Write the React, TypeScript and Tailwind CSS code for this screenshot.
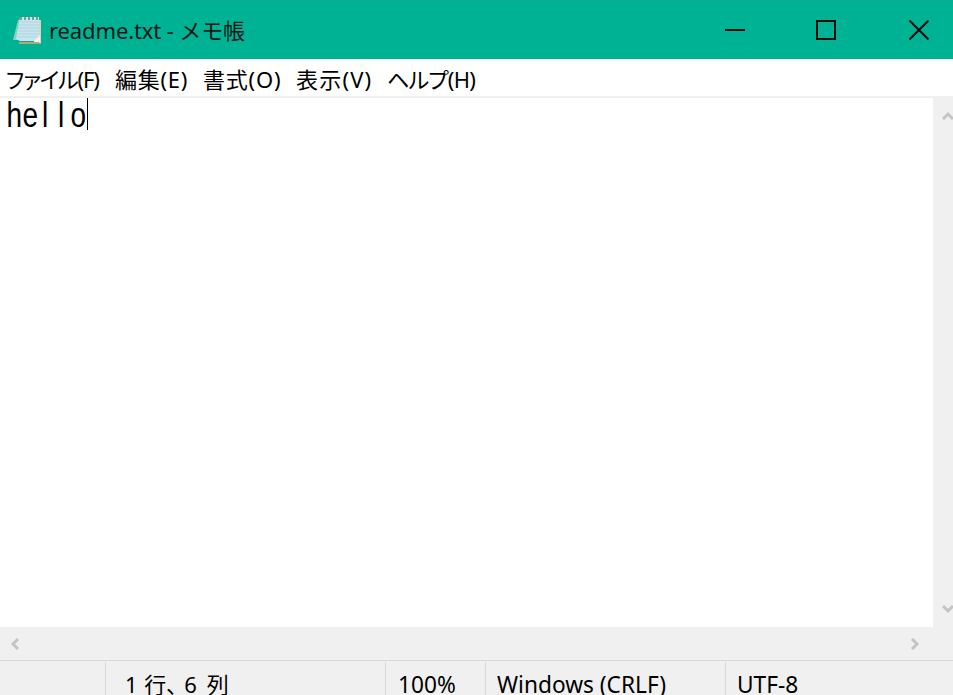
import React from 'react'

const uiFont = "font-['Noto_Sans','Noto_Sans_CJK_JP',sans-serif]"

const NotepadIcon = () => (
  <svg width="32" height="32" viewBox="0 0 32 32" className="shrink-0">
    <path d="M5 6 L12 6 L12 26 L0 26 Z" fill="#a9dbd6" opacity="0.75" />
    <rect x="6" y="28" width="22" height="2" fill="#b9a27e" />
    <rect x="26" y="6" width="2" height="23" fill="#d8d4c4" />
    <path d="M7 3 H26 V27 H7 L3 25 Z" fill="#c8e4ec" />
    <path d="M6 8 H26 M5.5 11 H26 M5 14 H26 M5 17 H26 M4.5 20 H26 M4 23 H26" stroke="#aed5e2" strokeWidth="1" />
    <path d="M21 27 L27 21 V28 H21 Z" fill="#f4f4ee" />
    <path d="M8 3 V6 M12 3 V6 M16 3 V6 M20 3 V6 M24 3 V6" stroke="#7c9a94" strokeWidth="2" />
  </svg>
)

const WindowButtons = () => (
  <div className="flex items-center h-full">
    <div className="w-[89px] flex justify-center">
      <svg width="20" height="20" viewBox="0 0 20 20">
        <rect x="0" y="9" width="20" height="2" fill="#0b0b0b" />
      </svg>
    </div>
    <div className="w-[93px] flex justify-center">
      <svg width="20" height="20" viewBox="0 0 20 20">
        <rect x="1" y="1" width="18" height="18" fill="none" stroke="#0b0b0b" strokeWidth="2" />
      </svg>
    </div>
    <div className="w-[93px] flex justify-center">
      <svg width="20" height="20" viewBox="0 0 20 20">
        <path d="M0.5 0.5 L19.5 19.5 M19.5 0.5 L0.5 19.5" stroke="#0b0b0b" strokeWidth="2" />
      </svg>
    </div>
  </div>
)

const Chevron = ({ d }: { d: string }) => (
  <svg width="12" height="12" viewBox="0 0 12 12" className="shrink-0">
    <path d={d} fill="none" stroke="#c4c4c4" strokeWidth="3" />
  </svg>
)

const App = () => {
  return (
    <div className={`w-[953px] h-[695px] overflow-hidden flex flex-col bg-white text-black ${uiFont}`}>
      <div className="h-[59px] shrink-0 bg-[#00b294] border-t border-[#12ab94] flex items-center justify-between">
        <div className="flex items-center pl-[13px] gap-[4px]">
          <NotepadIcon />
          <span className="text-[22px] leading-none tracking-[-0.12px] text-[#0a1a18]">readme.txt - メモ帳</span>
        </div>
        <div className="h-full -mr-[12px]">
          <WindowButtons />
        </div>
      </div>

      <div className="h-[39px] shrink-0 border-b-2 border-[#f0f0f0] flex items-center pl-[6px] pt-[3px] text-[22px] leading-none whitespace-nowrap">
        <span className="w-[109px] [font-feature-settings:'palt'] tracking-[-1.15px]">ファイル(F)</span>
        <span className="w-[88px] tracking-[0.75px]">編集(E)</span>
        <span className="w-[93px] tracking-[0.8px]">書式(O)</span>
        <span className="w-[91px] tracking-[1.2px]">表示(V)</span>
        <span className="[font-feature-settings:'palt'] tracking-[-0.75px]">ヘルプ(H)</span>
      </div>

      <div className="flex-1 flex min-h-0">
        <div className="flex-1">
          <div className="pl-[5px] h-[32px] flex items-center font-['Liberation_Sans',sans-serif] text-[35px] leading-none">
            {'hello'.split('').map((c, i) => (
              <span key={i} className="w-[16px] text-center scale-x-[0.8]">
                {c}
              </span>
            ))}
            <span className="w-px h-[32px] bg-black ml-[2px]" />
          </div>
        </div>
        <div className="w-[20px] bg-[#f0f0f0] flex flex-col justify-between items-center pl-[10px] py-[13px]">
          <Chevron d="M1 8 L6 3 L11 8" />
          <Chevron d="M1 4 L6 9 L11 4" />
        </div>
      </div>

      <div className="h-[33px] shrink-0 bg-[#f0f0f0] flex items-center justify-between pl-[10px] pr-[33px]">
        <Chevron d="M8 1 L3 6 L8 11" />
        <Chevron d="M4 1 L9 6 L4 11" />
      </div>

      <div className="h-[35px] shrink-0 bg-[#f0f0f0] border-t border-[#d7d7d7] flex text-[22.7px] leading-none overflow-hidden">
        <div className="w-[105px]" />
        <div className="w-[280px] border-l border-[#d7d7d7] mt-[1px] pl-[19px] pt-[11px] text-[22px] whitespace-nowrap [word-spacing:1px]">
          1 行<span className="[font-feature-settings:'palt'] pr-[7px]">、</span>6<span className="pl-[3px]"> 列</span>
        </div>
        <div className="w-[100px] border-l border-[#d7d7d7] mt-[1px] pl-[12px] pt-[12px]">100%</div>
        <div className="w-[240px] border-l border-[#d7d7d7] mt-[1px] pl-[11px] pt-[12px]">Windows (CRLF)</div>
        <div className="flex-1 border-l border-[#d7d7d7] mt-[1px] pl-[11px] pt-[12px]">UTF-8</div>
      </div>
    </div>
  )
}

export default App
